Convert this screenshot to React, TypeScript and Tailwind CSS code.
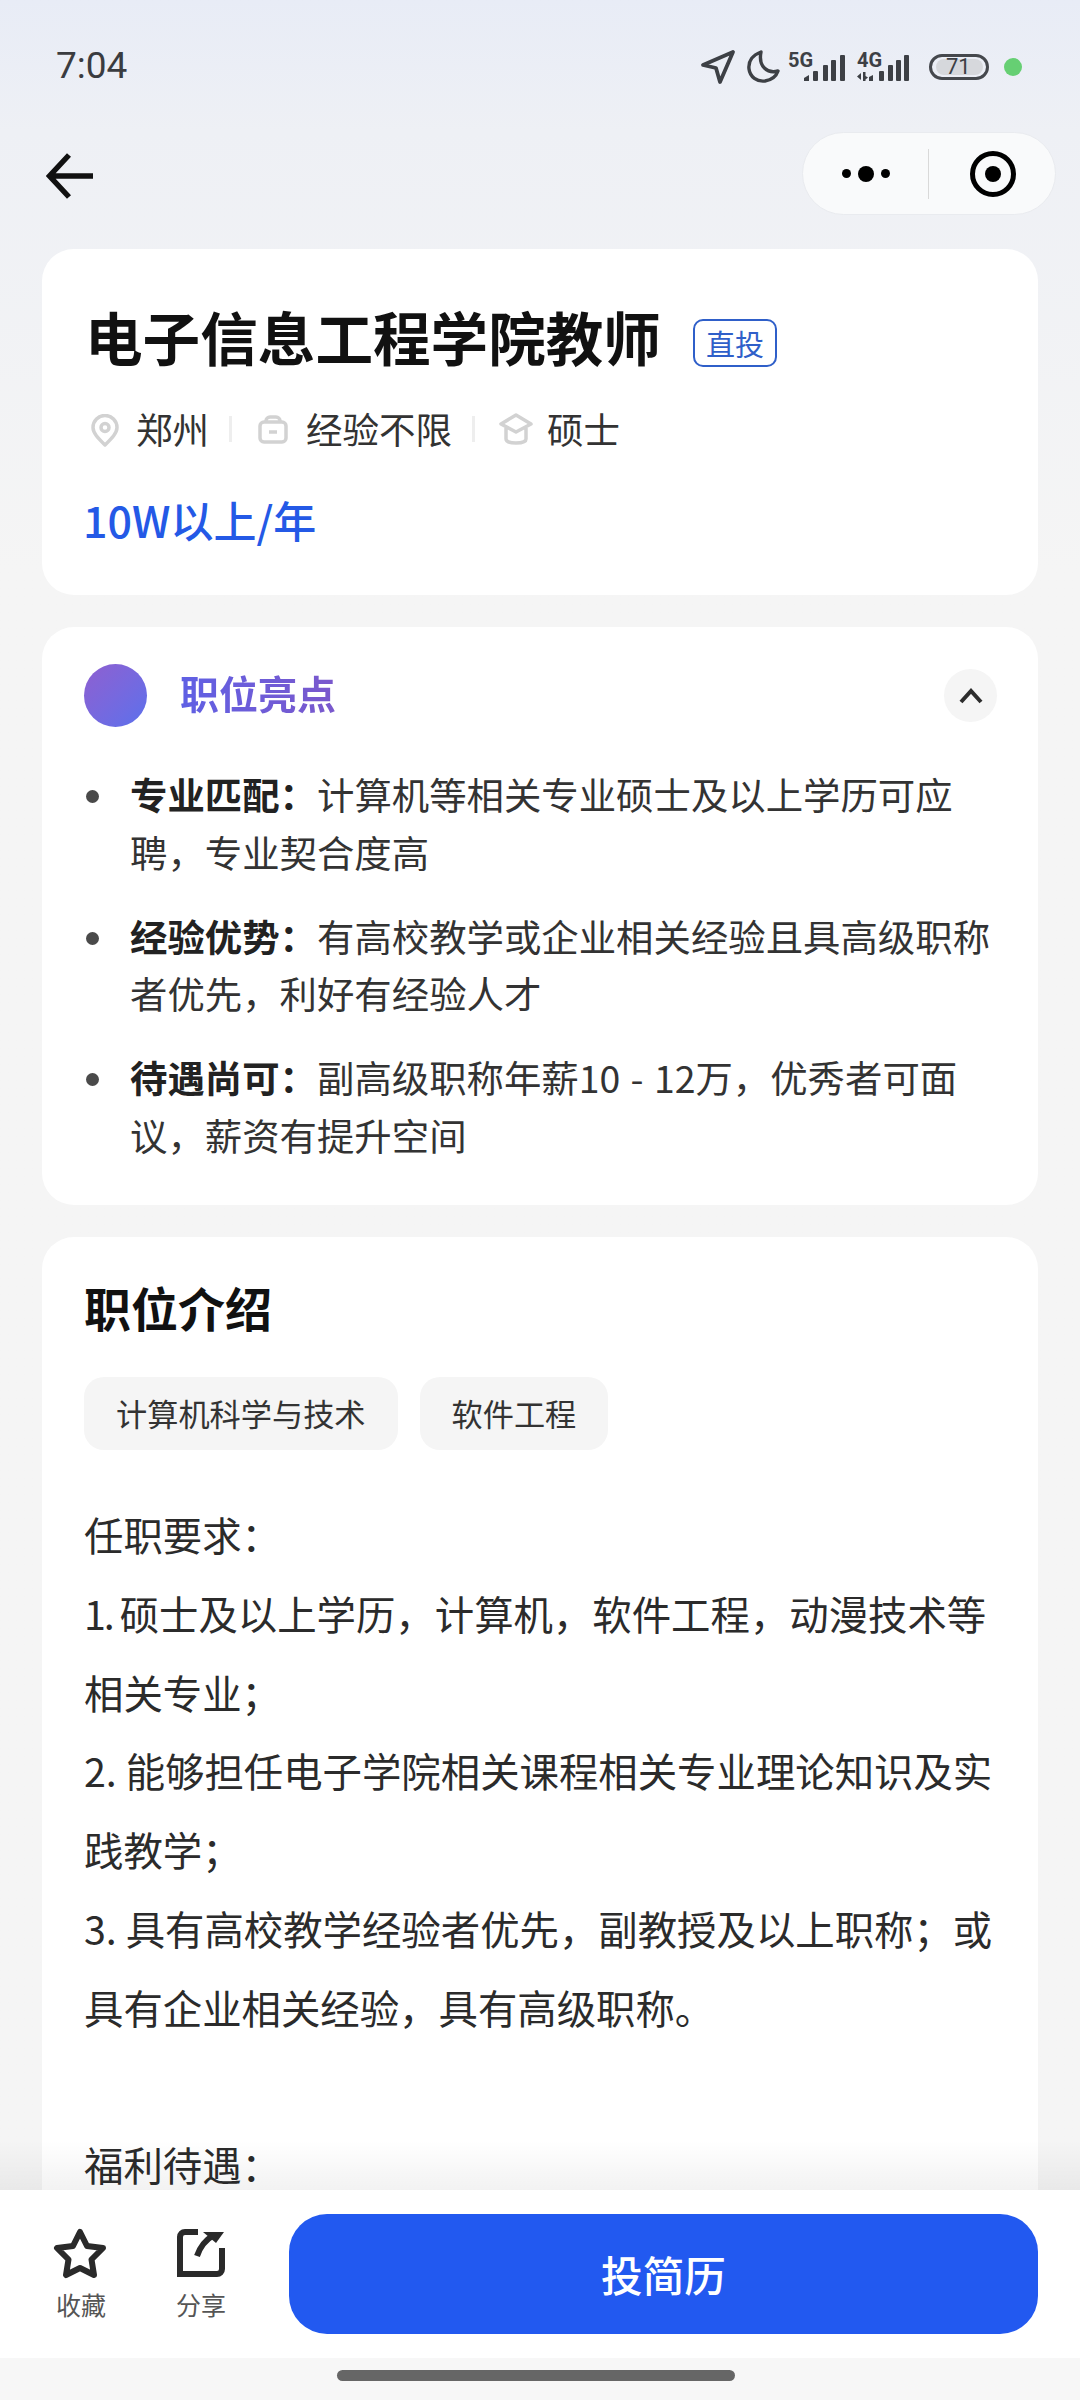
import React from "react";

const font = { fontFamily: '"Noto Sans CJK SC", "Noto Sans", sans-serif' };

function Signal({ label, four }: { label: string; four?: boolean }) {
  return (
    <svg width="58" height="30" viewBox="0 0 58 30" className="block overflow-visible">
      <text x={0} y="15" fontSize="20" fontWeight="700" fill="#3d4045" fontFamily="Roboto, sans-serif">{label}</text>
      {four ? (
        <>
          <path d="M0 24.500l4-3.500v7zM6 20h2.500v4l2.500 1.500-2.500 2V29H6zM12 25l4-2v6h-4z" fill="#3d4045" />
          <rect x="22" y="19" width="5" height="10" rx="1" fill="#3d4045" />
          <rect x="31" y="13" width="5" height="16" rx="1" fill="#3d4045" />
          <rect x="39" y="8" width="5" height="21" rx="1" fill="#3d4045" />
          <rect x="47" y="3" width="5" height="26" rx="1" fill="#3d4045" />
        </>
      ) : (
        <>
          <path d="M16 29v-3l5-3v6z" fill="#3d4045" />
          <rect x="25" y="19" width="5" height="10" rx="1" fill="#3d4045" />
          <rect x="35" y="13" width="5" height="16" rx="1" fill="#3d4045" />
          <rect x="43" y="8" width="5" height="21" rx="1" fill="#3d4045" />
          <rect x="52" y="3" width="5" height="26" rx="1" fill="#3d4045" />
        </>
      )}
    </svg>
  );
}

function StatusBar() {
  return (
    <div className="flex h-[132px] items-start justify-between pl-[56px] pr-[58px] pt-[43px]">
      <span className="text-[37px] leading-[46px] text-[#3a3c40]" style={{ fontFamily: "Roboto, sans-serif" }}>7:04</span>
      <div className="flex items-center gap-[15px] pt-[6px]">
        <div className="flex items-center">
          <svg width="36" height="36" viewBox="0 0 36 36" fill="none" stroke="#3d4045" strokeWidth="3.8" strokeLinejoin="round">
            <path d="M33 3L3 16l13 3 4 14z" />
          </svg>
          <svg width="34" height="34" viewBox="0 0 34 34" fill="none" stroke="#3d4045" strokeWidth="3.4" strokeLinejoin="round" className="ml-[11px]">
            <path d="M14 2C6 5 1 11 2 19c1 8 8 13 16 12 6-1 11-4 13-10-10 3-20-4-17-19z" />
          </svg>
          <div className="ml-[7px]"><Signal label="5G" /></div>
          <div className="ml-[11px]"><Signal label="4G" four /></div>
          <div className="relative ml-[14px] flex h-[26px] w-[60px] items-center rounded-full border-[3px] border-[#45484d] pl-[14px]">
            <div className="absolute bottom-[2px] left-[4px] right-[3px] top-[2px] rounded-full bg-[#d6d8dc]" />
            <span className="relative text-[22px] leading-[20px] text-[#3d4045]" style={{ fontFamily: "Roboto, sans-serif" }}>71</span>
          </div>
        </div>
        <div className="h-[18px] w-[18px] rounded-full bg-[#66cf73]" />
      </div>
    </div>
  );
}

function NavBar() {
  return (
    <div className="flex h-[117px] items-start justify-between pl-[46px] pr-[24px]">
      <svg width="48" height="46" viewBox="0 0 48 46" fill="none" stroke="#111" strokeWidth="5.500" className="mt-[21px]">
        <path d="M47 23H5M23 2L3.500 23 23 44" />
      </svg>
      <div className="flex h-[83px] w-[254px] items-center rounded-full border border-[#e9ebef] bg-[#f9fafb]">
        <div className="flex w-[125px] items-center justify-center gap-[7px]">
          <div className="h-[9px] w-[9px] rounded-full bg-black" />
          <div className="h-[16px] w-[16px] rounded-full bg-black" />
          <div className="h-[9px] w-[9px] rounded-full bg-black" />
        </div>
        <div className="h-[50px] w-px bg-[#d9d9d9]" />
        <div className="flex flex-1 justify-center pl-[2px]">
          <div className="flex h-[46px] w-[46px] items-center justify-center rounded-full border-[5px] border-black">
            <div className="h-[16px] w-[16px] rounded-full bg-black" />
          </div>
        </div>
      </div>
    </div>
  );
}

function Sep() {
  return <div className="ml-[20px] mr-[24px] h-[26px] w-[3px] bg-[#eeeeee]" />;
}

function JobCard() {
  return (
    <section className="h-[346px] rounded-[32px] bg-white pl-[42px] pt-[51px]">
      <div className="flex items-center">
        <h1 className="ml-[1px] text-[57.600px] font-bold leading-[72px] text-[#111]">电子信息工程学院教师</h1>
        <span className="ml-[32px] mt-[14px] flex h-[48px] w-[84px] items-center justify-center rounded-[10px] border-2 border-[#2f5fc9] text-[29px] leading-none text-[#2f5fc9]">直投</span>
      </div>
      <div className="ml-[7px] mt-[35px] flex h-[44px] items-center text-[36.500px] leading-[44px] text-[#333]">
        <svg width="28" height="33" viewBox="0 0 28 33" fill="none" stroke="#d2d2d2" strokeWidth="3.500" className="mr-[17px] mt-[3px]">
          <path d="M14 31C7 24 2 19 2 13.500a12 12 0 0124 0c0 5.500-5 10.500-12 17.500z" strokeLinejoin="round" />
          <circle cx="14" cy="13.500" r="4" />
        </svg>
        <span>郑州</span>
        <Sep />
        <svg width="30" height="29" viewBox="0 0 30 29" fill="none" stroke="#d2d2d2" strokeWidth="3.500" className="mr-[18px] ml-[2px]">
          <rect x="2" y="7" width="26" height="20" rx="4" />
          <path d="M8 7V6a4 4 0 014-4h6a4 4 0 014 4v1M11 17h8" />
        </svg>
        <span>经验不限</span>
        <Sep />
        <svg width="34" height="32" viewBox="0 0 34 32" fill="none" stroke="#d2d2d2" strokeWidth="3.500" strokeLinejoin="round" className="mr-[14px]">
          <path d="M17 2L2 11l15 8 15-8zM7 15v11c0 2 3 4 10 4s10-2 10-4V15" />
        </svg>
        <span>硕士</span>
      </div>
      <div className="-ml-px mt-[40px] text-[43px] font-medium leading-[56px] text-[#2459e6]">10W以上/年</div>
    </section>
  );
}

function Highlight({ head, lines }: { head: string; lines: string[] }) {
  return (
    <li className="flex">
      <div className="ml-[2px] mr-[31px] mt-[24px] h-[13px] w-[13px] shrink-0 rounded-full bg-[#4a4a4a]" />
      <p className="text-[37.400px] leading-[57.500px] text-[#333] [word-spacing:2px]">
        <b className="font-semibold text-[#222]">{head}：</b>
        {lines[0]}
        <br />
        {lines[1]}
      </p>
    </li>
  );
}

function HighlightCard() {
  return (
    <section className="mt-[32px] h-[578px] rounded-[32px] bg-white pl-[42px] pr-[41px] pt-[37px]">
      <div className="flex items-center justify-between">
        <div className="flex items-center gap-[33px]">
          <div className="h-[63px] w-[63px] rounded-full bg-gradient-to-br from-[#8e5fd0] to-[#5a70ec]" />
          <span className="mb-[8px] bg-gradient-to-r from-[#5f60e4] to-[#7a58cc] bg-clip-text text-[39px] font-semibold leading-[50px] text-transparent">职位亮点</span>
        </div>
        <div className="flex h-[53px] w-[53px] items-center justify-center rounded-full bg-[#f5f5f5]">
          <svg width="24" height="16" viewBox="0 0 24 16" fill="none" stroke="#2d2d2d" strokeWidth="4">
            <path d="M2 14L12 3l10 11" />
          </svg>
        </div>
      </div>
      <ul className="mt-[39px] flex flex-col gap-[26.500px]">
        <Highlight head="专业匹配" lines={["计算机等相关专业硕士及以上学历可应", "聘，专业契合度高"]} />
        <Highlight head="经验优势" lines={["有高校教学或企业相关经验且具高级职称", "者优先，利好有经验人才"]} />
        <Highlight head="待遇尚可" lines={["副高级职称年薪10 - 12万，优秀者可面", "议，薪资有提升空间"]} />
      </ul>
    </section>
  );
}

function IntroCard() {
  const rest = [
    "相关专业；",
    "2. 能够担任电子学院相关课程相关专业理论知识及实",
    "践教学；",
    "3. 具有高校教学经验者优先，副教授及以上职称；或",
    "具有企业相关经验，具有高级职称。",
    "\u00a0",
    "福利待遇：",
  ];
  return (
    <section className="mt-[32px] rounded-[32px] bg-white px-[42px] pb-[40px] pt-[40px]">
      <h2 className="text-[47px] font-bold leading-[60px] text-[#111]">职位介绍</h2>
      <div className="mt-[40px] flex gap-[22px]">
        <span className="flex h-[73px] items-center rounded-[20px] bg-[#f5f5f5] px-[32px] text-[31.200px] text-[#333]">计算机科学与技术</span>
        <span className="flex h-[73px] items-center rounded-[20px] bg-[#f5f5f5] px-[32px] text-[31.200px] text-[#333]">软件工程</span>
      </div>
      <div className="mt-[45px] text-[39.400px] leading-[78.800px] text-[#2b2b2b]">
        <div className="whitespace-nowrap">任职要求：</div>
        <div className="whitespace-nowrap">
          <span className="tracking-[-2px]">1. </span>硕士及以上学历，计算机，软件工程，动漫技术等
        </div>
        {rest.map((l, i) => (
          <div key={i} className="whitespace-nowrap">{l}</div>
        ))}
      </div>
    </section>
  );
}

function BottomBar() {
  return (
    <div className="relative flex h-[168px] shrink-0 items-center bg-white pl-[52px] pr-[42px]">
      <div className="pointer-events-none absolute bottom-full left-0 right-0 h-[50px] bg-gradient-to-b from-transparent to-black/5" />
      <div className="flex w-[56px] flex-col items-center">
        <svg width="54" height="52" viewBox="0 0 54 52" fill="none" stroke="#2a2a2a" strokeWidth="6" strokeLinejoin="round">
          <path d="M27 4l7 14 16 2-11.500 11.500L41 47l-14-7-14 7 2.500-15.500L4 20l16-2z" />
        </svg>
        <span className="ml-[2px] mt-[8px] text-[25px] leading-[32px] text-[#555]">收藏</span>
      </div>
      <div className="ml-[65px] flex w-[56px] flex-col items-center">
        <svg width="50" height="50" viewBox="0 0 50 50" fill="none" stroke="#2a2a2a" strokeWidth="6" className="mb-[2px]">
          <path d="M22 4H9a5 5 0 00-5 5v37h37a5 5 0 005-5V20" />
          <path d="M21 28c3-9 10-17 17-21" />
          <path d="M27 4h21l-8 11z" fill="#2a2a2a" stroke="none" />
        </svg>
        <span className="mt-[8px] text-[25px] leading-[32px] text-[#555]">分享</span>
      </div>
      <button className="ml-[60px] flex h-[120px] flex-1 items-center justify-center rounded-[38px] bg-[#2259f0] text-[41.600px] font-medium text-white">投简历</button>
    </div>
  );
}

export default function App() {
  return (
    <div className="relative flex h-[2400px] w-[1080px] flex-col overflow-hidden bg-[#f6f6f6]" style={font}>
      <div className="min-h-0 flex-1 overflow-hidden bg-gradient-to-b from-[#e8ecf6] via-[#eef0f5] via-[6%] to-[#f5f5f5] to-[26%]">
        <StatusBar />
        <NavBar />
        <main className="px-[42px]">
          <JobCard />
          <HighlightCard />
          <IntroCard />
        </main>
      </div>
      <BottomBar />
      <div className="flex h-[42px] shrink-0 justify-center bg-[#f7f7f7] pr-[8px] pt-[12px]">
        <div className="h-[11px] w-[398px] rounded-full bg-[#666]" />
      </div>
    </div>
  );
}
